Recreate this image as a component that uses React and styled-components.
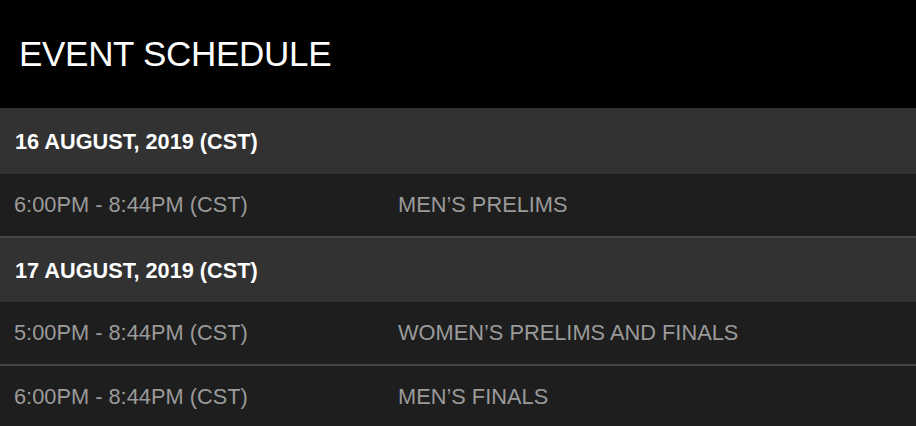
import React from 'react';
import styled, { createGlobalStyle } from 'styled-components';

const GlobalStyle = createGlobalStyle`
  body {
    margin: 0;
    background: #1e1e1e;
    font-family: "Liberation Sans", Arial, Helvetica, sans-serif;
  }
`;

const Page = styled.div`
  width: 916px;
  min-height: 426px;
  background: #1e1e1e;
  overflow: hidden;
`;

const Header = styled.header`
  height: 108px;
  background: #000;
  display: flex;
  align-items: center;
  padding-left: 19px;
  box-sizing: border-box;
`;

const Title = styled.h1`
  margin: 0;
  color: #fff;
  font-size: 35px;
  font-weight: 400;
  letter-spacing: -0.3px;
`;

const DateRow = styled.div`
  height: ${props => (props.$first ? '66px' : '64px')};
  background: #323232;
  display: flex;
  align-items: center;
  padding: 2px 0 0 15px;
  box-sizing: border-box;
  color: #fff;
  font-size: 21.7px;
  font-weight: 700;
`;

const TimeRow = styled.div`
  height: 64px;
  display: grid;
  grid-template-columns: 384px 1fr;
  align-items: center;
  padding-left: 14px;
  box-sizing: border-box;
  border-bottom: 2px solid #454545;
  background: #1e1e1e;
  color: #9a9a9a;
  font-size: 21.8px;
`;

const schedule = [
  {
    date: '16 AUGUST, 2019 (CST)',
    events: [{ time: '6:00PM - 8:44PM (CST)', name: 'MEN’S PRELIMS' }]
  },
  {
    date: '17 AUGUST, 2019 (CST)',
    events: [
      { time: '5:00PM - 8:44PM (CST)', name: 'WOMEN’S PRELIMS AND FINALS' },
      { time: '6:00PM - 8:44PM (CST)', name: 'MEN’S FINALS' }
    ]
  }
];

const App = () => (
  <Page>
    <GlobalStyle />
    <Header>
      <Title>EVENT SCHEDULE</Title>
    </Header>
    {schedule.map((day, i) => (
      <section key={day.date}>
        <DateRow $first={i === 0}>{day.date}</DateRow>
        {day.events.map(ev => (
          <TimeRow key={ev.name}>
            <span>{ev.time}</span>
            <span>{ev.name}</span>
          </TimeRow>
        ))}
      </section>
    ))}
  </Page>
);

export default App;
